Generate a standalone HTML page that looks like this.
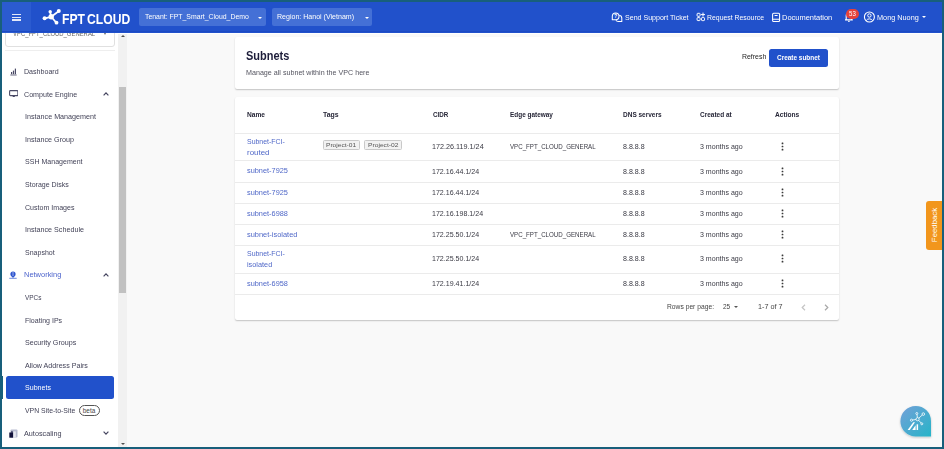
<!DOCTYPE html>
<html><head><meta charset="utf-8">
<style>
*{box-sizing:border-box;margin:0;padding:0}
html,body{width:944px;height:449px;overflow:hidden;background:#185f7b;font-family:"Liberation Sans",sans-serif}
.abs{position:absolute}
#hdr{position:absolute;left:2px;top:2px;width:940px;height:30.5px;background:#2151cb}
#ham{position:absolute;left:2px;top:2px;width:29px;height:30.5px;background:#2b5bd0}
.t{position:absolute;white-space:nowrap;line-height:1}
.hw{color:#fff;font-size:7.2px}
.drop{position:absolute;top:8px;height:18px;background:#4470d6;border-radius:2px}
#side{position:absolute;left:2px;top:32px;width:116px;height:415px;background:#fff}
#sb{position:absolute;left:118px;top:32px;width:9px;height:415px;background:#f1f1f1}
#thumb{position:absolute;left:119px;top:87px;width:7px;height:206px;background:#c1c1c1}
#main{position:absolute;left:127px;top:32px;width:815px;height:415px;background:#f9f9f9}
.card{position:absolute;background:#fff;border-radius:2px;box-shadow:0 1px 1.5px rgba(0,0,0,.22)}
.nav{color:#4a4a5e;font-size:7.1px}
.th{font-weight:bold;color:#262637;font-size:6.6px}
.td{color:#3a3a44;font-size:6.9px}
.lk{color:#4a62c8;font-size:7.1px}
.line{position:absolute;left:235px;width:604px;height:1px;background:#ebebeb}
</style></head><body>
<div id="H" style="position:absolute;left:0;top:0;z-index:10"><div id="hdr"></div>
<div id="ham"></div>
<!-- hamburger -->
<div class="abs" style="left:12px;top:13.75px;width:8.8px;height:1.3px;background:#e4e9f8"></div>
<div class="abs" style="left:12px;top:16.75px;width:8.8px;height:1.3px;background:#e4e9f8"></div>
<div class="abs" style="left:12px;top:19.25px;width:8.8px;height:1.3px;background:#e4e9f8"></div>
<!-- logo icon -->
<svg class="abs" style="left:40px;top:8px" width="24" height="19" viewBox="40 8 24 19">
 <g stroke="#fff" stroke-width="1.7" fill="none">
  <line x1="51.2" y1="16.8" x2="50.2" y2="12"/>
  <line x1="51.2" y1="16.8" x2="58.7" y2="11.2"/>
  <line x1="51.2" y1="16.8" x2="44.6" y2="18.3"/>
  <line x1="51.2" y1="16.8" x2="56.5" y2="22.9"/>
 </g>
 <g fill="#fff">
  <circle cx="51.2" cy="16.8" r="2.7"/>
  <circle cx="50.2" cy="11.8" r="1.7"/>
  <circle cx="58.8" cy="11.1" r="2.0"/>
  <circle cx="44.6" cy="18.3" r="2.0"/>
  <circle cx="56.5" cy="22.7" r="1.9"/>
 </g>
</svg>
<!-- tenant / region -->
<div class="drop" style="left:139px;width:127px"></div>
<div class="abs" style="left:258px;top:16.5px;width:0;height:0;border-left:2.2px solid transparent;border-right:2.2px solid transparent;border-top:2.4px solid #fff"></div>
<div class="drop" style="left:272px;width:100px"></div>
<div class="abs" style="left:364.5px;top:16.5px;width:0;height:0;border-left:2.2px solid transparent;border-right:2.2px solid transparent;border-top:2.4px solid #fff"></div>
<!-- right nav -->
<svg class="abs" style="left:606px;top:6px" width="20" height="20" viewBox="606 6 20 20"><g fill="none" stroke="#fff" stroke-width="1.05" stroke-linejoin="round"><path d="M619.2 15.2Q621.8 15.6 621.8 18.2V21.4H618.2Q616.6 21.4 615.9 20.3"/><path d="M615.6 12.9A3.4 3.4 0 0 1 619 16.3A3.4 3.4 0 0 1 615.6 19.7H612.3V16.3A3.4 3.4 0 0 1 615.6 12.9Z"/></g><text x="615.7" y="18.4" font-size="5.2" font-weight="bold" fill="#fff" text-anchor="middle" font-family="Liberation Sans">?</text></svg>
<svg class="abs" style="left:692px;top:8px" width="20" height="18" viewBox="692 8 20 18"><g fill="none" stroke="#fff" stroke-width="1"><rect x="697.1" y="13.3" width="3" height="3" rx="0.7"/><rect x="697.1" y="17.6" width="3" height="3" rx="0.7"/><rect x="701.5" y="17.6" width="3" height="3" rx="0.7"/><path d="M703 12.6V16.6M701 14.6H705"/></g></svg>
<svg class="abs" style="left:767px;top:8px" width="20" height="18" viewBox="767 8 20 18"><g fill="none" stroke="#fff" stroke-width="1.05"><rect x="772.6" y="13.2" width="7" height="8.2" rx="1"/><path d="M772.6 19.3H779.6M774.6 15.4H777.6"/></g></svg>
<svg class="abs" style="left:838px;top:4px" width="42" height="24" viewBox="838 4 42 24"><g fill="none" stroke="#fff" stroke-width="1.1"><path d="M845 19.9H852.8M846.2 19.9V15.5a2.7 2.7 0 0 1 5.4 0V19.9"/><path d="M848.2 21.4h1.4"/></g><circle cx="869.4" cy="17" r="5" fill="none" stroke="#fff" stroke-width="1.1"/><circle cx="869.4" cy="15.5" r="1.7" fill="none" stroke="#fff" stroke-width="1"/><path d="M866.2 20.6a3.6 3.2 0 0 1 6.4 0" fill="none" stroke="#fff" stroke-width="1"/></svg>
<div class="abs" style="left:846.3px;top:8.8px;width:12.5px;height:9.9px;border-radius:5px;background:#e5423a"></div>
<div class="t" style="left:849.2px;top:10.7px;font-size:6.4px;color:#fff;transform:scaleX(.95);transform-origin:0 0">53</div>

<div class="abs" style="left:921.8px;top:16.2px;width:0;height:0;border-left:2.2px solid transparent;border-right:2.2px solid transparent;border-top:2.4px solid #fff"></div>
<div id="t0" class="t" style="left:62.40px;top:10.58px;font-size:15.4px;font-weight:700;color:#fff;transform:scaleX(0.7883);transform-origin:0 0;word-spacing:-1.5px">FPT CLOUD</div>
<div id="t1" class="t" style="left:145.19px;top:13.13px;font-size:7.4px;font-weight:400;color:#fff;transform:scaleX(0.9323);transform-origin:0 0;">Tenant: FPT_Smart_Cloud_Demo</div>
<div id="t2" class="t" style="left:277.41px;top:13.13px;font-size:7.4px;font-weight:400;color:#fff;transform:scaleX(0.9532);transform-origin:0 0;">Region: Hanoi (Vietnam)</div>
<div id="t3" class="t" style="left:625.00px;top:13.53px;font-size:7.4px;font-weight:400;color:#fff;transform:scaleX(0.9552);transform-origin:0 0;">Send Support Ticket</div>
<div id="t4" class="t" style="left:707.45px;top:13.53px;font-size:7.4px;font-weight:400;color:#fff;transform:scaleX(0.9314);transform-origin:0 0;">Request Resource</div>
<div id="t5" class="t" style="left:782.39px;top:13.53px;font-size:7.4px;font-weight:400;color:#fff;transform:scaleX(1.0107);transform-origin:0 0;">Documentation</div>
<div id="t6" class="t" style="left:876.62px;top:13.53px;font-size:7.4px;font-weight:400;color:#fff;transform:scaleX(0.9864);transform-origin:0 0;">Mong Nuong</div>
<div id="hdrshadow" class="abs" style="left:2px;top:31.4px;width:940px;height:1.1px;background:#1c4ac3"></div>
</div>
<!-- sidebar -->
<div id="main"></div>
<div id="side"></div>
<div id="sb"></div>
<div id="thumb"></div>
<div class="abs" style="left:118px;top:32.5px;width:824px;height:1.8px;background:#fff"></div>
<div class="abs" style="left:120.5px;top:34.5px;width:0;height:0;border-left:2px solid transparent;border-right:2px solid transparent;border-bottom:2.2px solid #505050"></div>
<div class="abs" style="left:120.5px;top:442.5px;width:0;height:0;border-left:2px solid transparent;border-right:2px solid transparent;border-top:2.2px solid #505050"></div>
<div class="abs" style="left:5px;top:20px;width:110px;height:26.5px;border:1px solid #e0e0e0;border-radius:3px;background:#fff"></div>
<div class="abs" style="left:103.8px;top:32.6px;width:0;height:0;border-left:1.7px solid transparent;border-right:1.7px solid transparent;border-top:2.3px solid #666"></div>
<div class="abs" style="left:5px;top:50px;width:110px;height:1px;background:#eeeeee"></div>

<div id="t7" class="t" style="left:24.40px;top:67.98px;font-size:7.3px;font-weight:400;color:#434358;transform:scaleX(0.9706);transform-origin:0 0;">Dashboard</div>
<svg class="abs" style="left:10px;top:68.2px" width="7" height="7.5" viewBox="0 0 7 7.5"><g fill="#4a4a66"><rect x="1" y="4" width="1.2" height="2.2"/><rect x="2.9" y="2.6" width="1.2" height="3.6"/><rect x="4.8" y="0.6" width="1.2" height="5.6"/><rect x="0.3" y="6.6" width="6.4" height="0.8"/></g></svg>
<div id="t8" class="t" style="left:24.40px;top:90.58px;font-size:7.3px;font-weight:400;color:#434358;transform:scaleX(0.9770);transform-origin:0 0;">Compute Engine</div>
<svg class="abs" style="left:102.5px;top:91.90px" width="6" height="4" viewBox="0 0 6 4"><path d="M0.6 3.3L3 0.9L5.4 3.3" fill="none" stroke="#44445e" stroke-width="1.2"/></svg>
<svg class="abs" style="left:8.5px;top:89.8px" width="9.5" height="7.6" viewBox="0 0 9.5 7.6"><g fill="none" stroke="#4a4a66" stroke-width="1.1"><rect x="0.6" y="0.6" width="8.3" height="5" rx="0.8"/></g><rect x="3.7" y="5.8" width="2.1" height="1.6" fill="#4a4a66"/></svg>
<div id="t9" class="t" style="left:24.80px;top:113.18px;font-size:7.3px;font-weight:400;color:#434358;transform:scaleX(0.9838);transform-origin:0 0;">Instance Management</div>
<div id="t10" class="t" style="left:24.81px;top:135.78px;font-size:7.3px;font-weight:400;color:#434358;transform:scaleX(0.9823);transform-origin:0 0;">Instance Group</div>
<div id="t11" class="t" style="left:24.80px;top:158.38px;font-size:7.3px;font-weight:400;color:#434358;transform:scaleX(0.9652);transform-origin:0 0;">SSH Management</div>
<div id="t12" class="t" style="left:24.80px;top:180.98px;font-size:7.3px;font-weight:400;color:#434358;transform:scaleX(0.9625);transform-origin:0 0;">Storage Disks</div>
<div id="t13" class="t" style="left:24.80px;top:203.58px;font-size:7.3px;font-weight:400;color:#434358;transform:scaleX(0.9691);transform-origin:0 0;">Custom Images</div>
<div id="t14" class="t" style="left:24.80px;top:226.18px;font-size:7.3px;font-weight:400;color:#434358;transform:scaleX(0.9819);transform-origin:0 0;">Instance Schedule</div>
<div id="t15" class="t" style="left:24.79px;top:248.78px;font-size:7.3px;font-weight:400;color:#434358;transform:scaleX(0.9617);transform-origin:0 0;">Snapshot</div>
<div id="t16" class="t" style="left:24.39px;top:271.38px;font-size:7.3px;font-weight:400;color:#4d64cc;transform:scaleX(1.0228);transform-origin:0 0;">Networking</div>
<svg class="abs" style="left:102.5px;top:272.70px" width="6" height="4" viewBox="0 0 6 4"><path d="M0.6 3.3L3 0.9L5.4 3.3" fill="none" stroke="#44445e" stroke-width="1.2"/></svg>
<svg class="abs" style="left:9.3px;top:271px" width="8" height="8" viewBox="0 0 8 8"><circle cx="4" cy="3.1" r="2.6" fill="#2e55cf"/><path d="M2.4 5L4 7L5.6 5Z" fill="#2e55cf"/><path d="M0.3 7.3H7.7" stroke="#2e55cf" stroke-width="0.7"/><path d="M4 1V5" stroke="#c8d4f4" stroke-width="0.7"/></svg>
<div id="t17" class="t" style="left:24.81px;top:293.98px;font-size:7.3px;font-weight:400;color:#434358;transform:scaleX(0.8839);transform-origin:0 0;">VPCs</div>
<div id="t18" class="t" style="left:24.79px;top:316.58px;font-size:7.3px;font-weight:400;color:#434358;transform:scaleX(0.9627);transform-origin:0 0;">Floating IPs</div>
<div id="t19" class="t" style="left:24.79px;top:339.18px;font-size:7.3px;font-weight:400;color:#434358;transform:scaleX(0.9816);transform-origin:0 0;">Security Groups</div>
<div id="t20" class="t" style="left:24.79px;top:361.78px;font-size:7.3px;font-weight:400;color:#434358;transform:scaleX(0.9758);transform-origin:0 0;">Allow Address Pairs</div>
<div class="abs" style="left:6px;top:376.2px;width:108px;height:22.4px;background:#2151cb;border-radius:2.5px"></div>
<div class="abs" style="left:2px;top:376.2px;width:1.2px;height:22.4px;background:#17607c"></div>
<div id="t21" class="t" style="left:24.81px;top:384.38px;font-size:7.3px;font-weight:400;color:#fff;transform:scaleX(0.9676);transform-origin:0 0;">Subnets</div>
<div id="t22" class="t" style="left:24.81px;top:406.98px;font-size:7.3px;font-weight:400;color:#434358;transform:scaleX(0.9454);transform-origin:0 0;">VPN Site-to-Site</div>
<div class="abs" style="left:78.8px;top:404.90px;width:21px;height:11.4px;border:0.9px solid #555;border-radius:6px"></div>
<div id="t23" class="t" style="left:82.80px;top:408.12px;font-size:6.4px;font-weight:400;color:#444;transform:scaleX(1.0000);transform-origin:0 0;">beta</div>
<div id="t24" class="t" style="left:24.40px;top:429.58px;font-size:7.3px;font-weight:400;color:#434358;transform:scaleX(0.9934);transform-origin:0 0;">Autoscaling</div>
<svg class="abs" style="left:102.5px;top:431.30px" width="6" height="4" viewBox="0 0 6 4"><path d="M0.6 0.7L3 3.1L5.4 0.7" fill="none" stroke="#44445e" stroke-width="1.2"/></svg>
<svg class="abs" style="left:9px;top:429px" width="9" height="9" viewBox="0 0 9 9"><rect x="1.5" y="0.5" width="7" height="8" rx="1" fill="#b8bcd0"/><rect x="0.3" y="3.5" width="3.8" height="5.2" fill="#11113a"/><path d="M1.8 3.5L3 1.7L4.1 3.5Z" fill="#11113a"/><rect x="4.4" y="2.4" width="2.4" height="5.8" fill="#e8e9f0"/></svg>
<div id="t25" class="t" style="left:13.00px;top:30.08px;font-size:7.3px;font-weight:400;color:#666;transform:scaleX(0.8100);transform-origin:0 0;">VPC_FPT_CLOUD_GENERAL</div>
<div class="card" style="left:235px;top:37.3px;width:604px;height:52px"></div>
<div id="t26" class="t" style="left:246.44px;top:49.72px;font-size:12.2px;font-weight:700;color:#1d1d3a;transform:scaleX(0.9026);transform-origin:0 0;">Subnets</div>
<div id="t27" class="t" style="left:246.41px;top:69.08px;font-size:7.3px;font-weight:400;color:#555560;transform:scaleX(0.9786);transform-origin:0 0;">Manage all subnet within the VPC here</div>
<div id="t28" class="t" style="left:741.80px;top:53.43px;font-size:7.0px;font-weight:400;color:#262626;transform:scaleX(0.9911);transform-origin:0 0;">Refresh</div>
<div class="abs" style="left:768.5px;top:48.6px;width:59px;height:18px;background:#2151cb;border-radius:2.5px"></div>
<div id="t29" class="t" style="left:777.00px;top:54.23px;font-size:7.0px;font-weight:700;color:#fff;transform:scaleX(0.9195);transform-origin:0 0;">Create subnet</div>
<div class="card" style="left:235px;top:97px;width:604px;height:223px"></div>
<div id="t30" class="t" style="left:246.63px;top:111.87px;font-size:6.9px;font-weight:700;color:#262637;transform:scaleX(0.9602);transform-origin:0 0;">Name</div>
<div id="t31" class="t" style="left:323.40px;top:111.87px;font-size:6.9px;font-weight:700;color:#262637;transform:scaleX(1.0027);transform-origin:0 0;">Tags</div>
<div id="t32" class="t" style="left:433.11px;top:111.87px;font-size:6.9px;font-weight:700;color:#262637;transform:scaleX(0.9078);transform-origin:0 0;">CIDR</div>
<div id="t33" class="t" style="left:509.81px;top:111.87px;font-size:6.9px;font-weight:700;color:#262637;transform:scaleX(0.9328);transform-origin:0 0;">Edge gateway</div>
<div id="t34" class="t" style="left:623.00px;top:111.87px;font-size:6.9px;font-weight:700;color:#262637;transform:scaleX(0.9422);transform-origin:0 0;">DNS servers</div>
<div id="t35" class="t" style="left:699.57px;top:111.87px;font-size:6.9px;font-weight:700;color:#262637;transform:scaleX(0.9386);transform-origin:0 0;">Created at</div>
<div id="t36" class="t" style="left:775.00px;top:111.87px;font-size:6.9px;font-weight:700;color:#262637;transform:scaleX(0.9600);transform-origin:0 0;">Actions</div>
<div class="line" style="top:132.80px"></div>
<div class="line" style="top:160.10px"></div>
<div class="line" style="top:181.50px"></div>
<div class="line" style="top:202.70px"></div>
<div class="line" style="top:223.90px"></div>
<div class="line" style="top:244.90px"></div>
<div class="line" style="top:273.00px"></div>
<div class="line" style="top:293.50px"></div>
<div id="t37" class="t" style="left:246.61px;top:137.88px;font-size:7.3px;font-weight:400;color:#5068c8;transform:scaleX(0.9522);transform-origin:0 0;">Subnet-FCI-</div>
<div id="t38" class="t" style="left:246.56px;top:148.58px;font-size:7.3px;font-weight:400;color:#5068c8;transform:scaleX(1.0850);transform-origin:0 0;">routed</div>
<div id="t39" class="t" style="left:432.18px;top:143.23px;font-size:7.0px;font-weight:400;color:#3a3a44;transform:scaleX(1.0311);transform-origin:0 0;">172.26.119.1/24</div>
<div id="t40" class="t" style="left:509.82px;top:143.23px;font-size:7.0px;font-weight:400;color:#3a3a44;transform:scaleX(0.8806);transform-origin:0 0;">VPC_FPT_CLOUD_GENERAL</div>
<div id="t41" class="t" style="left:623.00px;top:143.23px;font-size:7.0px;font-weight:400;color:#3a3a44;transform:scaleX(1.0113);transform-origin:0 0;">8.8.8.8</div>
<div id="t42" class="t" style="left:699.59px;top:143.23px;font-size:7.0px;font-weight:400;color:#3a3a44;transform:scaleX(1.0058);transform-origin:0 0;">3 months ago</div>
<svg class="abs" style="left:781px;top:142.10px" width="3" height="9" viewBox="0 0 3 9"><g fill="#3a3a3a"><rect x="0.65" y="0.55" width="1.7" height="1.6" rx="0.5"/><rect x="0.65" y="3.7" width="1.7" height="1.6" rx="0.5"/><rect x="0.65" y="6.85" width="1.7" height="1.6" rx="0.5"/></g></svg>
<div class="abs" style="left:322.8px;top:140px;width:37.5px;height:9.7px;background:#f2f2f2;border:0.8px solid #c9c9c9;border-radius:1.5px"></div>
<div class="abs" style="left:364.4px;top:140px;width:37.8px;height:9.7px;background:#f2f2f2;border:0.8px solid #c9c9c9;border-radius:1.5px"></div>
<div id="t43" class="t" style="left:326.02px;top:141.81px;font-size:6.2px;font-weight:400;color:#555;transform:scaleX(1.0702);transform-origin:0 0;">Project-01</div>
<div id="t44" class="t" style="left:368.22px;top:141.81px;font-size:6.2px;font-weight:400;color:#555;transform:scaleX(1.0795);transform-origin:0 0;">Project-02</div>
<div id="t45" class="t" style="left:246.60px;top:167.48px;font-size:7.3px;font-weight:400;color:#5068c8;transform:scaleX(1.0081);transform-origin:0 0;">subnet-7925</div>
<div id="t46" class="t" style="left:432.19px;top:167.63px;font-size:7.0px;font-weight:400;color:#3a3a44;transform:scaleX(1.0097);transform-origin:0 0;">172.16.44.1/24</div>
<div id="t47" class="t" style="left:623.00px;top:167.63px;font-size:7.0px;font-weight:400;color:#3a3a44;transform:scaleX(1.0113);transform-origin:0 0;">8.8.8.8</div>
<div id="t48" class="t" style="left:699.59px;top:167.63px;font-size:7.0px;font-weight:400;color:#3a3a44;transform:scaleX(1.0058);transform-origin:0 0;">3 months ago</div>
<svg class="abs" style="left:781px;top:166.50px" width="3" height="9" viewBox="0 0 3 9"><g fill="#3a3a3a"><rect x="0.65" y="0.55" width="1.7" height="1.6" rx="0.5"/><rect x="0.65" y="3.7" width="1.7" height="1.6" rx="0.5"/><rect x="0.65" y="6.85" width="1.7" height="1.6" rx="0.5"/></g></svg>
<div id="t49" class="t" style="left:246.60px;top:188.58px;font-size:7.3px;font-weight:400;color:#5068c8;transform:scaleX(1.0081);transform-origin:0 0;">subnet-7925</div>
<div id="t50" class="t" style="left:432.19px;top:188.73px;font-size:7.0px;font-weight:400;color:#3a3a44;transform:scaleX(1.0097);transform-origin:0 0;">172.16.44.1/24</div>
<div id="t51" class="t" style="left:623.00px;top:188.73px;font-size:7.0px;font-weight:400;color:#3a3a44;transform:scaleX(1.0113);transform-origin:0 0;">8.8.8.8</div>
<div id="t52" class="t" style="left:699.59px;top:188.73px;font-size:7.0px;font-weight:400;color:#3a3a44;transform:scaleX(1.0058);transform-origin:0 0;">3 months ago</div>
<svg class="abs" style="left:781px;top:187.60px" width="3" height="9" viewBox="0 0 3 9"><g fill="#3a3a3a"><rect x="0.65" y="0.55" width="1.7" height="1.6" rx="0.5"/><rect x="0.65" y="3.7" width="1.7" height="1.6" rx="0.5"/><rect x="0.65" y="6.85" width="1.7" height="1.6" rx="0.5"/></g></svg>
<div id="t53" class="t" style="left:246.60px;top:209.78px;font-size:7.3px;font-weight:400;color:#5068c8;transform:scaleX(1.0081);transform-origin:0 0;">subnet-6988</div>
<div id="t54" class="t" style="left:432.20px;top:209.93px;font-size:7.0px;font-weight:400;color:#3a3a44;transform:scaleX(1.0105);transform-origin:0 0;">172.16.198.1/24</div>
<div id="t55" class="t" style="left:623.00px;top:209.93px;font-size:7.0px;font-weight:400;color:#3a3a44;transform:scaleX(1.0113);transform-origin:0 0;">8.8.8.8</div>
<div id="t56" class="t" style="left:699.59px;top:209.93px;font-size:7.0px;font-weight:400;color:#3a3a44;transform:scaleX(1.0058);transform-origin:0 0;">3 months ago</div>
<svg class="abs" style="left:781px;top:208.80px" width="3" height="9" viewBox="0 0 3 9"><g fill="#3a3a3a"><rect x="0.65" y="0.55" width="1.7" height="1.6" rx="0.5"/><rect x="0.65" y="3.7" width="1.7" height="1.6" rx="0.5"/><rect x="0.65" y="6.85" width="1.7" height="1.6" rx="0.5"/></g></svg>
<div id="t57" class="t" style="left:246.60px;top:230.88px;font-size:7.3px;font-weight:400;color:#5068c8;transform:scaleX(1.0186);transform-origin:0 0;">subnet-isolated</div>
<div id="t58" class="t" style="left:432.19px;top:231.03px;font-size:7.0px;font-weight:400;color:#3a3a44;transform:scaleX(1.0097);transform-origin:0 0;">172.25.50.1/24</div>
<div id="t59" class="t" style="left:509.82px;top:231.03px;font-size:7.0px;font-weight:400;color:#3a3a44;transform:scaleX(0.8806);transform-origin:0 0;">VPC_FPT_CLOUD_GENERAL</div>
<div id="t60" class="t" style="left:623.00px;top:231.03px;font-size:7.0px;font-weight:400;color:#3a3a44;transform:scaleX(1.0113);transform-origin:0 0;">8.8.8.8</div>
<div id="t61" class="t" style="left:699.59px;top:231.03px;font-size:7.0px;font-weight:400;color:#3a3a44;transform:scaleX(1.0058);transform-origin:0 0;">3 months ago</div>
<svg class="abs" style="left:781px;top:229.90px" width="3" height="9" viewBox="0 0 3 9"><g fill="#3a3a3a"><rect x="0.65" y="0.55" width="1.7" height="1.6" rx="0.5"/><rect x="0.65" y="3.7" width="1.7" height="1.6" rx="0.5"/><rect x="0.65" y="6.85" width="1.7" height="1.6" rx="0.5"/></g></svg>
<div id="t62" class="t" style="left:246.61px;top:249.88px;font-size:7.3px;font-weight:400;color:#5068c8;transform:scaleX(0.9522);transform-origin:0 0;">Subnet-FCI-</div>
<div id="t63" class="t" style="left:246.57px;top:260.58px;font-size:7.3px;font-weight:400;color:#5068c8;transform:scaleX(1.0016);transform-origin:0 0;">isolated</div>
<div id="t64" class="t" style="left:432.19px;top:255.23px;font-size:7.0px;font-weight:400;color:#3a3a44;transform:scaleX(1.0097);transform-origin:0 0;">172.25.50.1/24</div>
<div id="t65" class="t" style="left:623.00px;top:255.23px;font-size:7.0px;font-weight:400;color:#3a3a44;transform:scaleX(1.0113);transform-origin:0 0;">8.8.8.8</div>
<div id="t66" class="t" style="left:699.59px;top:255.23px;font-size:7.0px;font-weight:400;color:#3a3a44;transform:scaleX(1.0058);transform-origin:0 0;">3 months ago</div>
<svg class="abs" style="left:781px;top:254.10px" width="3" height="9" viewBox="0 0 3 9"><g fill="#3a3a3a"><rect x="0.65" y="0.55" width="1.7" height="1.6" rx="0.5"/><rect x="0.65" y="3.7" width="1.7" height="1.6" rx="0.5"/><rect x="0.65" y="6.85" width="1.7" height="1.6" rx="0.5"/></g></svg>
<div id="t67" class="t" style="left:246.60px;top:279.98px;font-size:7.3px;font-weight:400;color:#5068c8;transform:scaleX(1.0081);transform-origin:0 0;">subnet-6958</div>
<div id="t68" class="t" style="left:432.19px;top:280.13px;font-size:7.0px;font-weight:400;color:#3a3a44;transform:scaleX(1.0097);transform-origin:0 0;">172.19.41.1/24</div>
<div id="t69" class="t" style="left:623.00px;top:280.13px;font-size:7.0px;font-weight:400;color:#3a3a44;transform:scaleX(1.0113);transform-origin:0 0;">8.8.8.8</div>
<div id="t70" class="t" style="left:699.59px;top:280.13px;font-size:7.0px;font-weight:400;color:#3a3a44;transform:scaleX(1.0058);transform-origin:0 0;">3 months ago</div>
<svg class="abs" style="left:781px;top:279.00px" width="3" height="9" viewBox="0 0 3 9"><g fill="#3a3a3a"><rect x="0.65" y="0.55" width="1.7" height="1.6" rx="0.5"/><rect x="0.65" y="3.7" width="1.7" height="1.6" rx="0.5"/><rect x="0.65" y="6.85" width="1.7" height="1.6" rx="0.5"/></g></svg>
<div id="t71" class="t" style="left:667.17px;top:303.87px;font-size:6.9px;font-weight:400;color:#444;transform:scaleX(0.9743);transform-origin:0 0;">Rows per page:</div>
<div id="t72" class="t" style="left:723.36px;top:303.87px;font-size:6.9px;font-weight:400;color:#444;transform:scaleX(0.9452);transform-origin:0 0;">25</div>
<div class="abs" style="left:734.3px;top:306.3px;width:0;height:0;border-left:2.3px solid transparent;border-right:2.3px solid transparent;border-top:2.3px solid #555"></div>
<div id="t73" class="t" style="left:757.50px;top:303.87px;font-size:6.9px;font-weight:400;color:#444;transform:scaleX(1.0496);transform-origin:0 0;">1-7 of 7</div>
<svg class="abs" style="left:800.5px;top:303.5px" width="5" height="7" viewBox="0 0 5 7"><path d="M4 0.8L1.2 3.5L4 6.2" fill="none" stroke="#c4c4c4" stroke-width="1.2"/></svg>
<svg class="abs" style="left:824.3px;top:303.5px" width="5" height="7" viewBox="0 0 5 7"><path d="M1 0.8L3.8 3.5L1 6.2" fill="none" stroke="#a8a8a8" stroke-width="1.2"/></svg>
<div class="abs" style="left:926.2px;top:200.6px;width:16px;height:49px;background:#f2961c;border-radius:3px 0 0 3px"></div>
<div class="t" style="left:934.6px;top:225.1px;font-size:7.8px;color:#fff;transform:translate(-50%,-50%) rotate(-90deg);transform-origin:center">Feedback</div>
<svg class="abs" style="left:898px;top:403px" width="36" height="36" viewBox="898 403 36 36">
<defs><linearGradient id="ag" x1="0" y1="0" x2="1" y2="1"><stop offset="0" stop-color="#74a0d8"/><stop offset="1" stop-color="#26b4c8"/></linearGradient>
<filter id="sh" x="-30%" y="-30%" width="160%" height="160%"><feDropShadow dx="0" dy="1" stdDeviation="1" flood-opacity=".22"/></filter></defs>
<path d="M931 421.2V436.5H915.8A15.3 15.3 0 1 1 931 421.2Z" fill="url(#ag)" filter="url(#sh)"/>
<g stroke="#fff" stroke-width="0.8" fill="none"><circle cx="917.6" cy="419.2" r="1.6"/><circle cx="923.3" cy="414.1" r="1.3"/><circle cx="911.5" cy="420.2" r="1.1"/><circle cx="916.8" cy="413.5" r="1"/><circle cx="921.8" cy="423.8" r="1"/>
<path d="M918.8 418.1L922.3 415M917.4 417.6L917 414.5M916 419.5L912.6 420M918.7 420.4L921.2 423"/></g>
<path d="M907.6 430L913.3 422.2H915L909.8 430Z" fill="#fff"/><path d="M912.2 430L915.6 425.2V430Z" fill="#fff"/><rect x="916.6" y="424.3" width="1.5" height="5.7" fill="#fff"/>
</svg>
</body></html>
